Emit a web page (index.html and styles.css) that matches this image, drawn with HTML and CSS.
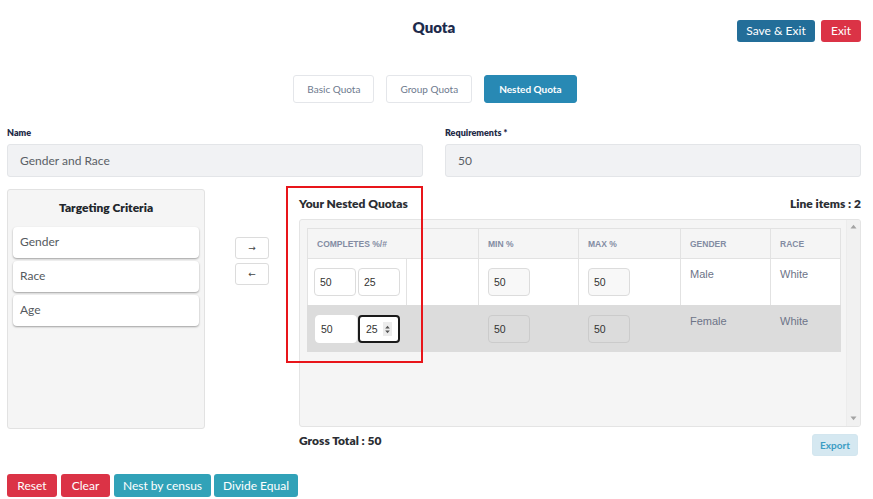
FILE: index.html
```html
<!DOCTYPE html>
<html>
<head>
<meta charset="utf-8">
<link rel="stylesheet" href="styles.css">
</head>
<body>
<div class="page">
  <header class="top">
    <div class="spacer"></div>
    <h1 class="title">Quota</h1>
    <div class="actions">
      <button class="btn btn-blue w-save">Save &amp; Exit</button>
      <button class="btn btn-red w-exit">Exit</button>
    </div>
  </header>

  <nav class="tabs">
    <button class="tab">Basic Quota</button>
    <button class="tab">Group Quota</button>
    <button class="tab tab-active">Nested Quota</button>
  </nav>

  <div class="fields">
    <div class="field">
      <div class="label">Name</div>
      <div class="input">Gender and Race</div>
    </div>
    <div class="field">
      <div class="label">Requirements *</div>
      <div class="input">50</div>
    </div>
  </div>

  <div class="work">
    <aside class="criteria">
      <div class="criteria-title">Targeting Criteria</div>
      <div class="crit-item">Gender</div>
      <div class="crit-item">Race</div>
      <div class="crit-item">Age</div>
    </aside>

    <div class="arrows">
      <button class="arrow-btn">&#8594;</button>
      <button class="arrow-btn">&#8592;</button>
    </div>

    <section class="nested">
      <div class="nested-head">
        <span class="h-bold">Your Nested Quotas</span>
        <span class="h-bold">Line items : 2</span>
      </div>
      <div class="scroll">
        <div class="scroll-inner">
          <table class="qtable">
            <thead>
              <tr>
                <th class="c1">COMPLETES %/#</th>
                <th class="c2">MIN %</th>
                <th class="c3">MAX %</th>
                <th class="c4">GENDER</th>
                <th class="c5">RACE</th>
              </tr>
            </thead>
            <tbody>
              <tr class="row-a">
                <td class="cell-pair">
                  <div class="pair pair-line">
                    <div class="num">50</div>
                    <div class="num">25</div>
                  </div>
                </td>
                <td><div class="num num-ro">50</div></td>
                <td><div class="num num-ro">50</div></td>
                <td class="txt">Male</td>
                <td class="txt">White</td>
              </tr>
              <tr class="row-b">
                <td class="cell-pair">
                  <div class="pair">
                    <div class="num num-plain">50</div>
                    <div class="num num-focus">25
                      <span class="spin"><svg width="7" height="11" viewBox="0 0 7 11"><path d="M1.2 4.5 L3.5 1.8 L5.8 4.5 Z M1.2 6.5 L3.5 9.2 L5.8 6.5 Z" fill="#555"/></svg></span>
                    </div>
                  </div>
                </td>
                <td><div class="num num-dis">50</div></td>
                <td><div class="num num-dis">50</div></td>
                <td class="txt">Female</td>
                <td class="txt">White</td>
              </tr>
            </tbody>
          </table>
        </div>
        <div class="vbar">
          <svg width="7" height="5" viewBox="0 0 7 5"><path d="M0.5 4.5 L3.5 0.8 L6.5 4.5 Z" fill="#a3a3a3"/></svg>
          <svg width="7" height="5" viewBox="0 0 7 5"><path d="M0.5 0.5 L3.5 4.2 L6.5 0.5 Z" fill="#a3a3a3"/></svg>
        </div>
      </div>
      <div class="nested-foot">
        <span class="h-bold">Gross Total : 50</span>
        <button class="export">Export</button>
      </div>
      <div class="annot"></div>
    </section>
  </div>

  <div class="bottom">
    <button class="btn btn-red w-reset">Reset</button>
    <button class="btn btn-red w-clear">Clear</button>
    <button class="btn btn-teal w-nest">Nest by census</button>
    <button class="btn btn-teal w-divide">Divide Equal</button>
  </div>
</div>
</body>
</html>
```

FILE: styles.css
```css
* { box-sizing: border-box; }
html, body { margin: 0; padding: 0; background: #fff; }
body {
  font-family: Lato, "Noto Sans", "Liberation Sans", sans-serif;
  color: #495057;
  width: 873px;
  height: 499px;
  overflow: hidden;
}
button { font-family: inherit; cursor: pointer; }
.page { padding: 0 12px 0 7px; }

.top {
  display: grid;
  grid-template-columns: 1fr auto 1fr;
  align-items: start;
  padding-top: 20px;
}
.title {
  margin: -2px 0 0 0;
  font-size: 15px;
  line-height: 18px;
  font-weight: 800;
  color: #1d2b4c;
}
.actions { display: flex; justify-content: flex-end; gap: 6px; }

.btn {
  height: 23px;
  border: none;
  border-radius: 3px;
  color: #fff;
  font-size: 12px;
  padding: 0;
  line-height: 23px;
  text-align: center;
}
.actions .btn { height: 22px; line-height: 22px; }
.w-save { width: 78px; }
.w-exit { width: 40px; }
.btn-blue { background: #236e99; }
.btn-red { background: #db3346; }
.btn-teal { background: #31a2b8; }

.tabs {
  display: flex;
  justify-content: center;
  gap: 12px;
  margin-top: 33px;
  padding-left: 2px;
}
.tab {
  height: 28px;
  border: 1px solid #e4e6ea;
  border-radius: 3px;
  background: #fff;
  color: #6e7a8e;
  font-size: 10px;
  padding: 0 13px;
}
.tab-active {
  background: #2889b4;
  border-color: #2889b4;
  color: #fff;
  font-weight: 700;
  padding: 0 14px;
}

.fields {
  display: flex;
  gap: 22px;
  margin-top: 24px;
}
.field { flex: 1; }
.label {
  font-size: 9px;
  line-height: 12px;
  font-weight: 800;
  color: #1f2b48;
  margin-bottom: 5px;
}
.input {
  height: 33px;
  background: #f1f2f4;
  border: 1px solid #e3e5e8;
  border-radius: 3px;
  padding-left: 12px;
  font-size: 12px;
  line-height: 31px;
  color: #5a5f66;
}

.work {
  display: flex;
  align-items: flex-start;
  margin-top: 12px;
}
.criteria {
  width: 198px;
  flex: none;
  height: 240px;
  background: #f5f5f5;
  border: 1px solid #e2e2e2;
  border-radius: 3px;
  padding: 0 5px;
}
.criteria-title {
  text-align: center;
  font-size: 12px;
  line-height: 14px;
  font-weight: 800;
  color: #22262c;
  padding-top: 11px;
  margin-bottom: 12px;
}
.crit-item {
  height: 31px;
  background: #fff;
  border-radius: 4px;
  box-shadow: 0 1px 2px rgba(0,0,0,0.35);
  padding-left: 7px;
  font-size: 12px;
  line-height: 30px;
  color: #555a60;
  margin-bottom: 3px;
}

.arrows {
  display: flex;
  flex-direction: column;
  gap: 4px;
  flex: none;
  margin: 48px 30px 0 30px;
}
.arrow-btn {
  width: 34px;
  height: 22px;
  border: 1px solid #dcdcdc;
  border-radius: 3px;
  background: #fff;
  color: #444;
  font-size: 9px;
  padding: 0;
  font-family: "DejaVu Sans", sans-serif;
}

.nested { flex: 1; min-width: 0; position: relative; }
.nested-head {
  height: 30px;
  display: flex;
  justify-content: space-between;
  align-items: center;
}
.h-bold {
  font-size: 12px;
  line-height: 14px;
  font-weight: 800;
  color: #2b2e33;
}
.scroll {
  height: 208px;
  background: #f5f5f5;
  border: 1px solid #e4e4e4;
  border-radius: 3px;
  display: flex;
  overflow: hidden;
}
.scroll-inner {
  flex: 1;
  min-width: 0;
  padding: 8px 6px 0 7px;
}
.vbar {
  width: 14px;
  flex: none;
  background: #f1f1f1;
  border-left: 1px solid #ececec;
  display: flex;
  flex-direction: column;
  justify-content: space-between;
  align-items: center;
  padding: 4px 0 5px;
}
.qtable {
  width: 533px;
  border-collapse: collapse;
  table-layout: fixed;
  font-family: "Liberation Sans", Arial, sans-serif;
}
.qtable th {
  height: 30px;
  text-align: left;
  font-size: 8.5px;
  font-weight: 700;
  color: #838ca3;
  padding: 0 9px;
  background: #f5f5f5;
  border: 1px solid #e2e2e2;
}
.c1 { width: 171px; }
.c2 { width: 100px; }
.c3 { width: 102px; }
.c4 { width: 90px; }
.c5 { width: 70px; }
.qtable td {
  vertical-align: top;
  padding: 9px 0 0 9px;
  border-left: 1px solid #e2e2e2;
  border-right: 1px solid #e2e2e2;
}
.row-a td { height: 46px; background: #fff; }
.row-b td { height: 47px; background: #dcdcdc; border-color: #dcdcdc; }
.qtable td.cell-pair { padding: 0; }
.pair {
  display: flex;
  gap: 2px;
  width: 99px;
  padding: 9px 0 0 6px;
}
.row-a .pair { height: 46px; }
.row-b .pair { height: 47px; padding-top: 10px; padding-left: 7px; gap: 1px; }
.pair-line { border-right: 1px solid #e2e2e2; }
.num {
  width: 42px;
  height: 28px;
  border: 1px solid #dcdcdc;
  border-radius: 4px;
  background: #fff;
  font-size: 10.5px;
  line-height: 26px;
  padding-left: 5px;
  color: #333;
  flex: none;
}
.num-ro { background: #f8f8f8; }
.num-dis { background: #dcdcdc; border-color: #cbcbcb; }
.row-b td:nth-child(2), .row-b td:nth-child(3) { padding-top: 10px; }
.num-plain { border-color: #fff; }
.num-focus {
  border: 2px solid #1a1a1a;
  border-radius: 4px;
  line-height: 24px;
  padding-left: 6px;
  display: flex;
  align-items: center;
  gap: 5px;
}
.spin {
  display: inline-flex;
  align-items: center;
  justify-content: center;
  width: 9px;
  height: 14px;
  background: #ececec;
}
.txt {
  font-size: 11px;
  line-height: 14px;
  color: #6d7488;
  padding-top: 8px !important;
}
.row-b .txt { padding-top: 9px !important; }

.nested-foot {
  margin-top: 7px;
  height: 22px;
  display: flex;
  justify-content: space-between;
  align-items: flex-start;
}
.export {
  height: 22px;
  width: 46px;
  margin-right: 3px;
  border: 1px solid #d3e6ef;
  border-radius: 3px;
  background: #d5e8f1;
  color: #3b9cc4;
  font-size: 10px;
  font-weight: 700;
  padding: 0;
}

.annot {
  position: absolute;
  left: -13px;
  top: -3px;
  width: 137px;
  height: 177px;
  border: 2px solid #e8151a;
  pointer-events: none;
}

.bottom {
  display: flex;
  gap: 4px;
  margin-top: 18px;
}
.w-reset { width: 50px; }
.w-clear { width: 49px; }
.w-nest { width: 97px; }
.w-divide { width: 84px; margin-left: -1px; }
```
